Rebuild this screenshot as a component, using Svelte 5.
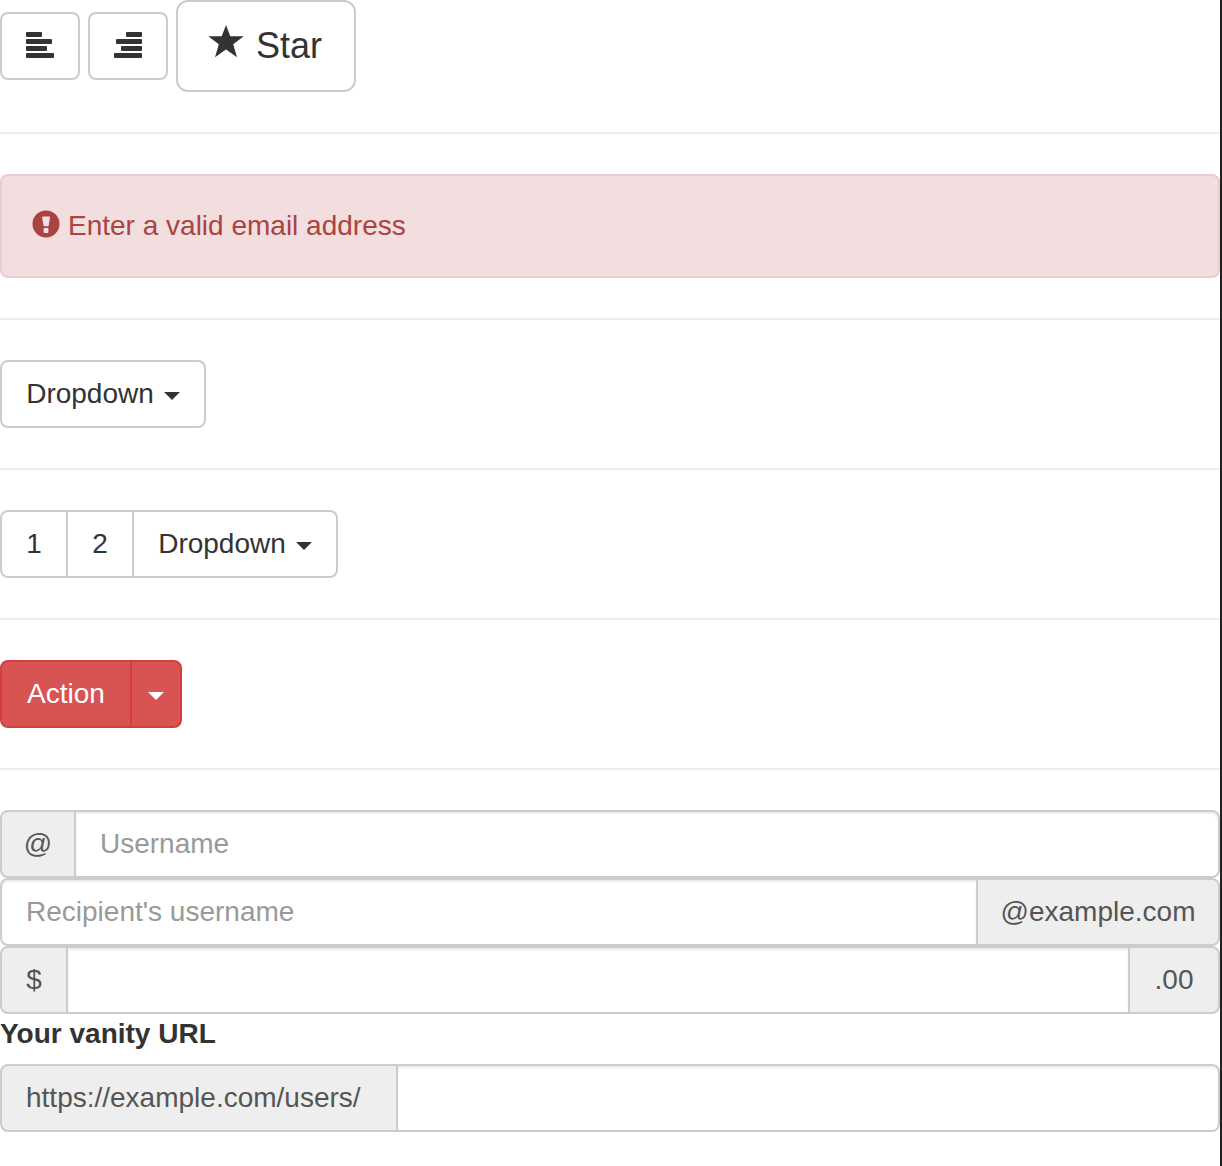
<script>
  // Bar lengths of the alignment glyphs, top to bottom
  const bars = [16, 26, 21, 28];

  let username = $state('');
  let recipient = $state('');
  let amount = $state('');
  let vanity = $state('');
</script>

<main class="page">
  <div class="toolbar">
    <button type="button" class="btn" aria-label="Left align">
      <svg class="icon" viewBox="0 0 28 28" aria-hidden="true">
        {#each bars as length, i}
          <rect x="0" y={i * 7} width={length} height="5" rx="1" />
        {/each}
      </svg>
    </button>
    <button type="button" class="btn" aria-label="Right align">
      <svg class="icon" viewBox="0 0 28 28" aria-hidden="true">
        {#each bars as length, i}
          <rect x={28 - length} y={i * 7} width={length} height="5" rx="1" />
        {/each}
      </svg>
    </button>
    <button type="button" class="btn large">
      <svg class="star" viewBox="0 0 36 36" aria-hidden="true">
        <path d="M18 1 L22.3 12.2 H35.8 L25.2 20.2 L29 33.2 L18 25.4 L7 33.2 L10.8 20.2 L0.2 12.2 H13.7 Z" />
      </svg>
      Star
    </button>
  </div>

  <hr />

  <div class="alert" role="alert">
    <svg class="icon alert-icon" viewBox="0 0 28 28" aria-hidden="true">
      <path
        fill-rule="evenodd"
        d="M14 0.4a13.5 13.5 0 1 0 0 27a13.5 13.5 0 0 0 0-27ZM11 6.6h6.2q.9 0 .8.9l-1.3 7.9q-.1.8-.9.8h-3.4q-.8 0-.9-.8l-1.3-7.9q-.1-.9.8-.9ZM12.4 18h3.2q.8 0 .8.8v3.4q0 .8-.8.8h-3.2q-.8 0-.8-.8v-3.4q0-.8.8-.8Z"
      />
    </svg>
    <span>Enter a valid email address</span>
  </div>

  <hr />

  <div class="group">
    <button type="button" class="btn menu" aria-haspopup="true">
      Dropdown <span class="caret"></span>
    </button>
  </div>

  <hr />

  <div class="group">
    <button type="button" class="btn">1</button>
    <button type="button" class="btn">2</button>
    <button type="button" class="btn menu" aria-haspopup="true">
      Dropdown <span class="caret"></span>
    </button>
  </div>

  <hr />

  <div class="group">
    <button type="button" class="btn danger action">Action</button>
    <button type="button" class="btn danger toggle" aria-haspopup="true" aria-label="Toggle dropdown">
      <span class="caret"></span>
    </button>
  </div>

  <hr />

  <form>
    <div class="input-group">
      <span class="addon at" id="user-addon">@</span>
      <input type="text" placeholder="Username" aria-label="Username" aria-describedby="user-addon" bind:value={username} />
    </div>
    <div class="input-group">
      <input type="text" placeholder="Recipient's username" aria-label="Recipient's username" aria-describedby="domain-addon" bind:value={recipient} />
      <span class="addon domain" id="domain-addon">@example.com</span>
    </div>
    <div class="input-group">
      <span class="addon currency">$</span>
      <input type="text" aria-label="Amount" bind:value={amount} />
      <span class="addon cents">.00</span>
    </div>
    <label for="vanity-url">Your vanity URL</label>
    <div class="input-group">
      <span class="addon url" id="url-addon">https://example.com/users/</span>
      <input type="text" id="vanity-url" aria-describedby="url-addon" bind:value={vanity} />
    </div>
  </form>
</main>

<style>
  :global(body) {
    margin: 0;
    background: #fff;
  }

  .page,
  .page * {
    box-sizing: border-box;
  }

  .page {
    min-height: 100vh;
    border-right: 2px solid #1e2021;
    font-family: 'Helvetica Neue', Helvetica, 'Liberation Sans', Arial, sans-serif;
    font-size: 28px;
    line-height: 40px;
    color: #333;
  }

  hr {
    height: 2px;
    margin: 40px 0;
    border: 0;
    background: #eee;
  }

  .toolbar {
    display: flex;
    align-items: center;
    gap: 8px;
  }

  .btn {
    display: inline-flex;
    align-items: center;
    justify-content: center;
    gap: 10px;
    min-width: 68px;
    height: 68px;
    margin: 0;
    padding: 0 24px;
    border: 2px solid #ccc;
    border-radius: 8px;
    background: #fff;
    color: #333;
    font: inherit;
    white-space: nowrap;
    cursor: pointer;
  }

  .btn:hover {
    background: #f5f5f5;
  }

  .large {
    gap: 12px;
    height: 92px;
    padding: 0 32px 0 30px;
    border-radius: 12px;
    font-size: 36px;
    line-height: 48px;
  }

  .icon {
    flex: none;
    width: 28px;
    height: 28px;
    fill: currentColor;
  }

  .star {
    flex: none;
    width: 36px;
    height: 36px;
    margin-bottom: 8px;
    fill: currentColor;
  }

  .alert {
    display: flex;
    align-items: center;
    gap: 8px;
    padding: 30px;
    border: 2px solid #ebccd1;
    border-radius: 8px;
    background: #f2dede;
    color: #a94442;
  }

  .alert-icon {
    margin-bottom: 4px;
  }

  .group {
    display: flex;
  }

  .group .btn:not(:first-child) {
    margin-left: -2px;
    border-top-left-radius: 0;
    border-bottom-left-radius: 0;
  }

  .group .btn:not(:last-child) {
    border-top-right-radius: 0;
    border-bottom-right-radius: 0;
  }

  .menu {
    min-width: 206px;
  }

  .caret {
    width: 0;
    height: 0;
    margin-top: 4px;
    border-top: 8px solid currentColor;
    border-right: 8px solid transparent;
    border-left: 8px solid transparent;
  }

  .danger {
    border-color: #d43f3d;
    background: #d75452;
    color: #fff;
  }

  .danger:hover {
    background: #c9302c;
  }

  .action {
    min-width: 132px;
  }

  .toggle {
    min-width: 52px;
    padding: 0 16px;
  }

  .input-group {
    display: flex;
    height: 68px;
  }

  .addon {
    flex: none;
    padding: 12px 0;
    border: 2px solid #ccc;
    border-radius: 8px;
    background: #eee;
    color: #555;
    text-align: center;
    white-space: nowrap;
  }

  .at {
    width: 76px;
  }

  .domain {
    width: 244px;
  }

  .currency {
    width: 68px;
  }

  .cents {
    width: 92px;
  }

  .url {
    width: 398px;
    padding-left: 24px;
    text-align: left;
  }

  input {
    flex: 1;
    min-width: 0;
    margin: 0;
    padding: 0 24px;
    border: 2px solid #ccc;
    border-radius: 8px;
    background: #fff;
    box-shadow: inset 0 2px 2px rgba(0, 0, 0, 0.075);
    color: #555;
    font: inherit;
  }

  input:focus {
    outline: 0;
    border-color: #66afe9;
  }

  input::placeholder {
    color: #999;
    opacity: 1;
  }

  .input-group > :not(:first-child) {
    border-left-width: 0;
    border-top-left-radius: 0;
    border-bottom-left-radius: 0;
  }

  .input-group > :not(:last-child) {
    border-top-right-radius: 0;
    border-bottom-right-radius: 0;
  }

  .input-group > input:not(:last-child) {
    border-right-width: 0;
  }

  .input-group > input + .addon {
    border-left-width: 2px;
  }

  label {
    display: block;
    width: fit-content;
    margin-bottom: 10px;
    font-weight: 700;
  }
</style>
